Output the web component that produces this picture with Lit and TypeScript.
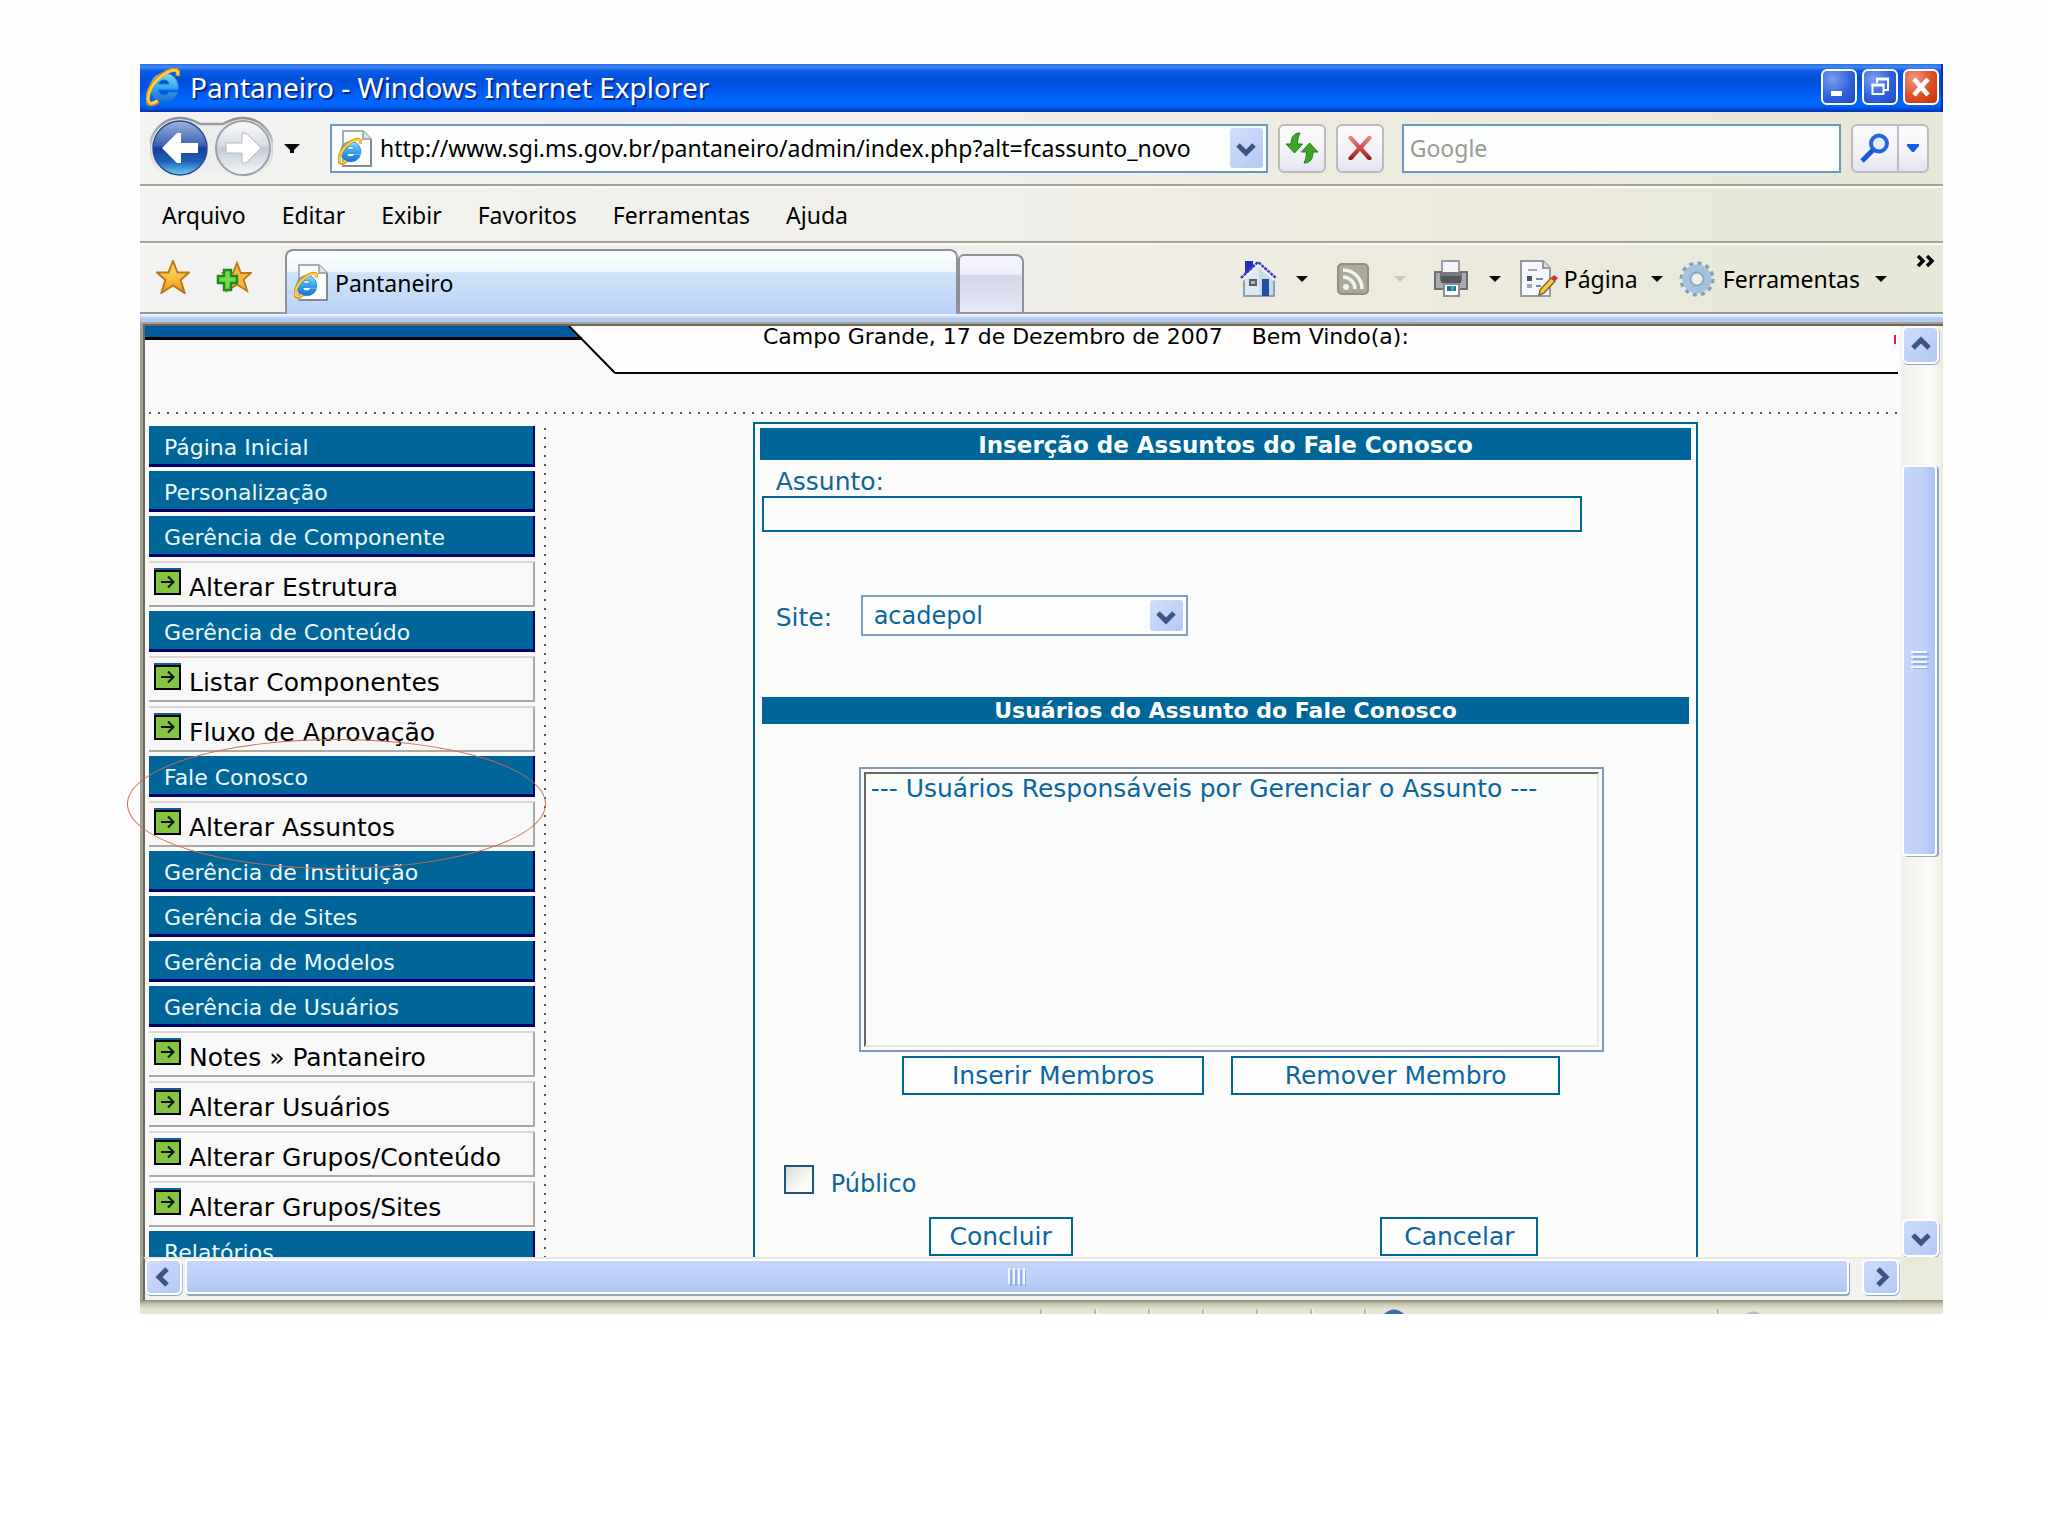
import { LitElement, html, css, svg } from "lit";
import type { TemplateResult } from "lit";
import { customElement } from "lit/decorators.js";

type MenuEntry = { label: string; sub?: boolean };

const MENU: MenuEntry[] = [
  { label: "Página Inicial" },
  { label: "Personalização" },
  { label: "Gerência de Componente" },
  { label: "Alterar Estrutura", sub: true },
  { label: "Gerência de Conteúdo" },
  { label: "Listar Componentes", sub: true },
  { label: "Fluxo de Aprovação", sub: true },
  { label: "Fale Conosco" },
  { label: "Alterar Assuntos", sub: true },
  { label: "Gerência de Instituição" },
  { label: "Gerência de Sites" },
  { label: "Gerência de Modelos" },
  { label: "Gerência de Usuários" },
  { label: "Notes » Pantaneiro", sub: true },
  { label: "Alterar Usuários", sub: true },
  { label: "Alterar Grupos/Conteúdo", sub: true },
  { label: "Alterar Grupos/Sites", sub: true },
  { label: "Relatórios" },
];

const icon = (w: number, h: number, body: TemplateResult) =>
  html`<svg class="icon" width=${w} height=${h} viewBox="0 0 ${w} ${h}" aria-hidden="true">${body}</svg>`;

/* Browser mark, drawn in a 34x38 box. */
const markShapes = svg`
  <defs>
    <linearGradient id="mk" x1="0" y1="0" x2="0" y2="1">
      <stop offset="0" stop-color="#8ad8fb"/><stop offset=".5" stop-color="#35a6ee"/><stop offset="1" stop-color="#1a70d2"/>
    </linearGradient>
  </defs>
  <path d="M32 24h-9c-1 2-3 2.800-5.200 2.800-3.200 0-5-1.800-5.200-4.800H32.500c.8-9.400-4.600-17-14.200-17C9.600 5 4 11.500 4 19.500c0 8.300 5.600 14.400 13.900 14.400 6.800 0 12-3.600 14.100-9.900zM12.800 16c.4-2.400 2.400-4 5.200-4s4.700 1.600 5 4z" fill="url(#mk)" stroke="#1b74c9" stroke-width="1"/>
  <path d="M31.500 8c1-3.500.5-6-2.500-6.200C22 1.600 9 10.500 4.500 20 1 27.500.4 34.500 4 35.800c2.400.8 5.500-.8 8.200-3" fill="none" stroke="#d9960f" stroke-width="4.500"/>
  <path d="M31.500 7c.6-2.600.2-4.600-2.500-4.800C22 2 9.400 11 5 20.200 1.600 27.500 1.200 33.800 4.400 35c2 .6 4.500-.4 7-2.200" fill="none" stroke="#ffd34d" stroke-width="2.400"/>`;

const pageMark = icon(34, 37, svg`
  <path d="M5 1h20l8 8v27H5z" fill="#fcfdfe" stroke="#a9adb0" stroke-width="2"/>
  <path d="M33 9v27H5" fill="none" stroke="#85888c" stroke-width="2"/>
  <path d="M25 1v8h8" fill="#dfe3e8" stroke="#a9adb0" stroke-width="2"/>
  <g transform="translate(0 8) scale(.7)">${markShapes}</g>`);

const caret = (fill: string) => icon(12, 6, svg`<path d="M0 0h12l-6 6z" fill=${fill}/>`);
const bigCaret = icon(16, 9, svg`<path d="M0 0h16l-6 6v3H6V6z" fill="#0a0a0a"/>`);

const chevron = (dir: "up" | "down" | "left" | "right") => {
  const turn = { down: 0, left: 90, up: 180, right: 270 }[dir];
  return icon(22, 22, svg`<path transform="rotate(${turn} 11 11)" d="M3 8l8 8 8-8" fill="none" stroke="#3d5585" stroke-width="5"/>`);
};

const arrowBox = icon(27, 27, svg`
  <rect width="27" height="27" fill="#000"/><rect width="27" height="2" fill="#0b5fa0"/>
  <rect x="2" y="4" width="23" height="21" fill="#85c442"/>
  <path d="M7 14h11M14 8.500l5.500 5.500-5.500 5.500" fill="none" stroke="#111" stroke-width="2"/>`);

const star = svg`<path d="M17 1l4.500 11.500H33L24.600 20l4 13L17 25.500 5.400 33l4-13L1 12.500h11.500z"/>`;

@customElement("app-root")
export class AppRoot extends LitElement {
  static styles = css`
    :host {
      display: block;
      padding: 64px 105px 0 140px;
      background: #fefefe;
      --ui: "Noto Sans", "DejaVu Sans Condensed", sans-serif;
      --page: "DejaVu Sans", Verdana, sans-serif;
      --brand: #006699;
      --bar: linear-gradient(90deg, #f2f2f0 0%, #f0efeb 45%, #eeebdf 65%, #e6e8d8 100%);
    }
    * { box-sizing: border-box; }
    button, input, select { font: inherit; color: inherit; margin: 0; padding: 0; border: 0; border-radius: 0; outline: 0; appearance: none; background: none; }
    a { color: inherit; text-decoration: none; }
    .icon { display: block; flex: none; }
    .window { display: flex; flex-direction: column; position: relative; font: 23px/32px var(--ui); color: #000; }

    .title {
      display: flex; align-items: center; height: 48px; padding: 0 4px 2px 6px; gap: 5px;
      background: linear-gradient(180deg, #2b6fe0 0, #3f8cf5 3px, #0b5be6 7px, #0050dc 16px, #0058f0 28px, #0068ff 36px, #0064fa 42px, #0038b8 47px);
      color: #fff; box-shadow: inset -2px 0 #0830b0;
    }
    .title h1 { flex: 1; margin: 0 0 0 5px; font: 28px/40px var(--ui); text-shadow: 2px 2px #0a2a8a; }
    .winbtn {
      display: grid; place-items: center; width: 36px; height: 36px; border: 2px solid #fff; border-radius: 6px;
      background: radial-gradient(circle at 30% 25%, #7ba0f2, #2f62dc 55%, #1d48c0);
    }
    .close { background: radial-gradient(circle at 30% 25%, #f09a80, #dd4b26 55%, #c03208); }

    .nav { display: flex; align-items: center; height: 74px; padding: 0 14px 0 10px; background: var(--bar); border-bottom: 2px solid #a5a399; }
    .travel { margin-right: 11px; }
    .recent { margin-right: 30px; }
    .address, .search { display: flex; align-items: center; height: 49px; border: 2px solid #6d97be; background: #fcfefd; min-width: 0; }
    .address { flex: 924 1 0; padding: 0 3px 0 6px; gap: 8px; }
    .address input, .search input { flex: 1; min-width: 0; width: 0; height: 32px; }
    .search { flex: 423 1 0; padding: 0 6px; margin-right: 10px; }
    .search input::placeholder { color: #9a9a94; opacity: 1; }
    .drop { display: grid; place-items: center; width: 33px; height: 40px; border-radius: 3px; background: linear-gradient(135deg, #d3e0fb, #b1c8f4); flex: none; }
    .tool { display: grid; place-items: center; width: 48px; height: 49px; border: 2px solid #bcbcc0; border-radius: 6px; background: linear-gradient(180deg, #fbfbfc, #f2f2f6 60%, #e3e4f0); flex: none; }
    .reload { margin: 0 10px; }
    .stop { margin-right: 18px; }
    .go { border-radius: 6px 0 0 6px; }
    .engines { width: 30px; border-left: 0; border-radius: 0 6px 6px 0; }

    .menu { display: flex; align-items: center; gap: 36px; height: 57px; padding: 0 22px; background: var(--bar); border-top: 2px solid #fbfbf8; border-bottom: 2px solid #a5a399; }

    .tabs { display: flex; align-items: center; height: 71px; padding-right: 8px; background: var(--bar); border-top: 2px solid #fbfbf8; border-bottom: 2px solid #96989a; }
    .favs { display: flex; gap: 26px; width: 145px; padding: 0 0 4px 16px; }
    .tab {
      display: flex; align-items: center; gap: 7px; flex: 0 1 673px; align-self: flex-end; height: 65px; margin-bottom: -2px; padding: 0 8px 0 7px;
      border: 2px solid #8e9298; border-bottom: 0; border-radius: 8px 8px 0 0;
      background: linear-gradient(180deg, #fbfffd 0, #eef7fd 20px, #cfe4fa 22px, #c3dbf8 45px, #b6cef5 65px);
    }
    .newtab { flex: none; width: 66px; height: 58px; align-self: flex-end; border: 2px solid #8e9298; border-bottom: 0; border-radius: 6px 8px 0 0; background: linear-gradient(180deg, #f6f7fc 0, #eceefa 18px, #d3d7ea 20px, #e6e9f8 58px); }
    .tools { display: flex; align-items: center; align-self: stretch; flex: 1; justify-content: flex-end; }
    .tools > * { display: flex; align-items: center; }
    .home { gap: 19px; margin-right: 29px; }
    .feed { gap: 25px; margin-right: 27px; }
    .print { gap: 20px; margin-right: 19px; }
    .page { gap: 6px; margin-right: 16px; }
    .page .icon:last-child, .gear .icon:last-child { margin-left: 7px; }
    .gear { gap: 8px; margin-right: 29px; }
    .tools .more { align-self: flex-start; margin-top: 10px; }
    .strip { height: 8px; background: linear-gradient(180deg, #f4f8ff 0, #cfdffa 3px, #b4c9f2 4px); }

    .body { display: grid; grid-template-columns: minmax(0, 1fr) 42px; border-left: 3px solid #a3a294; border-top: 2px solid #a3a294; background: #e9ead9; }
    .view { max-height: 933px; overflow: hidden; border-left: 2px solid #6b675c; border-top: 2px solid #6b675c; background: #fafafa; color: #000; font: 22px/32px var(--page); }

    .banner { display: flex; height: 48px; padding-right: 3px; position: relative; }
    .welcome { display: flex; gap: 29px; flex: 1; padding-left: 148px; border-bottom: 2px solid #000; background: #fcfdfc; line-height: 22px; white-space: nowrap; }
    .banner svg { flex: none; display: block; }
    .mask { position: absolute; right: 7px; top: -5px; width: 35%; max-width: 480px; height: 30px; background: #fefefe; }
    .cursor { position: absolute; right: 5px; top: 9px; width: 2px; height: 9px; background: #e8145a; }
    .dots { height: 2px; margin: 38px 0 0 4px; background: repeating-linear-gradient(90deg, #555 0 2px, transparent 2px 9px); }

    .columns { display: flex; align-items: stretch; padding-left: 4px; }
    .side { display: flex; flex-direction: column; gap: 4px; width: 386px; padding: 12px 0 0; flex: none; list-style: none; margin: 0; }
    .head a { display: block; height: 41px; padding: 6px 0 0 15px; border-right: 2px solid #000066; border-bottom: 3px solid #000066; background: var(--brand); color: #eef8fc; line-height: 32px; }
    .item a { display: flex; height: 46px; gap: 8px; padding: 5px 0 0 5px; border: 2px solid #aaa9a6; border-top-color: #d9d8d6; border-left: 0; background: #f8f8f9; font-size: 25px; line-height: 40px; white-space: nowrap; }
    .rail { width: 2px; margin: 14px 0 0 9px; flex: none; background: repeating-linear-gradient(180deg, #555 0 2px, transparent 2px 9px); }

    .main { flex: 1; padding: 8px 0 0 4px; display: flex; justify-content: center; }
    .panel { width: 70%; padding: 4px 5px 40px; border: 2px solid var(--brand); background: #fbfcfa; color: #0b659f; font-size: 25px; }
    .bar { margin: 0; background: var(--brand); color: #fff; text-align: center; font: bold 23px/32px var(--page); height: 32px; padding-top: 1px; }
    .bar.thin { font-size: 22px; line-height: 27px; height: 27px; padding: 0; margin: 61px 2px 0; }
    .label { display: block; padding: 8px 0 0 16px; line-height: 28px; }
    .subject { display: block; width: 88%; max-width: 820px; height: 36px; margin-left: 2px; border: 2px solid var(--brand); padding: 0 6px; }
    .site { display: flex; align-items: center; gap: 24px; margin-top: 63px; padding-left: 16px; }
    .site label { padding-top: 5px; width: 61px; }
    .combo { position: relative; width: 327px; height: 41px; font-size: 24px; }
    .combo select { width: 100%; height: 41px; border: 2px solid #7e9fc0; padding: 0 44px 0 11px; background: #fcfdfd; }
    .combo .drop { position: absolute; right: 5px; top: 5px; height: 31px; pointer-events: none; }
    .members { width: 80%; max-width: 745px; margin: 43px 0 0 99px; }
    .listbox { padding: 3px; border: 2px solid #7e9cba; background: #fbfbfd; }
    .listbox select { display: block; width: 100%; height: 275px; border: 2px solid #6a6664; border-right-color: #e8e8e2; border-bottom-color: #e8e8e2; background: #fafbfb; overflow: hidden; }
    .listbox option { padding: 0 5px; color: #0b659f; min-height: 0; line-height: 30px; }
    .pair { display: flex; justify-content: center; gap: 27px; margin-top: 4px; }
    .btn { height: 39px; border: 2px solid var(--brand); background: #fcfdfc; line-height: 32px; text-align: center; cursor: pointer; }
    .add { flex: 0 1 302px; } .del { flex: 0 1 329px; }
    .public { display: flex; gap: 17px; margin: 70px 0 0 24px; height: 29px; font-size: 24px; }
    .public input { width: 30px; height: 29px; border: 2px solid #1d5480; background: linear-gradient(135deg, #d9dbd8, #fbfbfa 70%); }
    .public label { line-height: 39px; height: 39px; }
    .actions { display: flex; justify-content: space-between; margin: 23px 153px 0 169px; }
    .ok { width: 144px; } .cancel { width: 158px; }

    .vbar { display: flex; flex-direction: column; align-items: flex-start; padding-left: 1px; border-top: 2px solid #6b675c; background: linear-gradient(90deg, #f0efe8, #fbfbf7 70%, #f3f2ea 90%, #e9e8dc); }
    .hbar { display: flex; align-items: flex-start; height: 43px; border-left: 2px solid #6b675c; border-top: 2px solid #ebe9df; padding-right: 2px; background: #f2f3ee; gap: 3px; }
    .sb { display: grid; place-items: center; width: 37px; height: 38px; flex: none; border: 2px solid #fff; border-radius: 6px; background: linear-gradient(135deg, #cfdcfb, #b3c8f4); box-shadow: 0 2px 0 -1px #8fa8d0, 1px 1px 0 #a9bde0; }
    .hbar .sb { height: 36px; }
    .grow-a { flex: 101 1 0; } .grow-b { flex: 364 1 0; }
    .thumb { display: grid; place-items: center; border: 2px solid #fff; border-radius: 4px; }
    .vbar .thumb { width: 35px; flex: 389 1 0; background: linear-gradient(90deg, #c6d5fb, #bfd0f8 60%, #adc3f3); box-shadow: 2px 1px 0 #8fa8c8; }
    .hbar .thumb { flex: 1; height: 35px; margin-right: 10px; background: linear-gradient(180deg, #c8d5f9, #bdd1f7 50%, #b0c7ee); box-shadow: 1px 2px 0 #8fa8c0; }
    .corner { background: #e9ead9; }

    .status { display: flex; height: 14px; padding-top: 9px; background: linear-gradient(180deg, #87877a 0, #a9aa98 2px, #cdcdb9 5px, #e3e4d1 9px, #e6e7d6 14px); }
    .status span { border-left: 2px solid #babbaa; box-shadow: inset 1px 0 #f7f7ef; height: 5px; }
    .status .lead { flex: 1; border: 0; box-shadow: none; }
    .cell { width: 54px; }
    .zone { width: 353px; padding-left: 18px; } .last { width: 226px; padding-left: 24px; }

    .ring { position: absolute; left: -13px; top: 675px; width: 419px; height: 130px; border: 1px solid #cf6a4c; border-radius: 50%; pointer-events: none; }
  `;

  private titleBar() {
    return html`<header class="title">
      ${icon(34, 38, markShapes)}
      <h1>Pantaneiro - Windows Internet Explorer</h1>
      <button class="winbtn" aria-label="Minimizar">${icon(22, 22, svg`<path d="M3 15h11v5H3z" fill="#fff"/>`)}</button>
      <button class="winbtn" aria-label="Restaurar">${icon(22, 22, svg`<path d="M8 7V3h11v11h-4M3.500 9h11v9h-11z" fill="none" stroke="#fff" stroke-width="2"/><path d="M2.500 7.500h13v3h-13zM7 1.500h13v3H7z" fill="#fff"/>`)}</button>
      <button class="winbtn close" aria-label="Fechar">${icon(22, 22, svg`<path d="M4 3l14 16M18 3L4 19" stroke="#fff" stroke-width="4.500"/>`)}</button>
    </header>`;
  }

  private navBar() {
    return html`<div class="nav">
      <div class="travel">${icon(123, 64, svg`
        <defs>
          <linearGradient id="bk" x1="0" y1="0" x2="0" y2="1"><stop offset="0" stop-color="#9db3de"/><stop offset=".45" stop-color="#3c63b4"/><stop offset=".5" stop-color="#123f98"/><stop offset=".75" stop-color="#1f62b8"/><stop offset="1" stop-color="#6fd0f6"/></linearGradient>
          <linearGradient id="fw" x1="0" y1="0" x2="0" y2="1"><stop offset="0" stop-color="#fafbfc"/><stop offset=".45" stop-color="#d9dde3"/><stop offset=".5" stop-color="#c3cad3"/><stop offset="1" stop-color="#f4fbfd"/></linearGradient>
          <linearGradient id="rm" x1="0" y1="0" x2="0" y2="1"><stop offset="0" stop-color="#8d9094"/><stop offset=".5" stop-color="#cfd1d2"/><stop offset="1" stop-color="#f5f6f5"/></linearGradient>
        </defs>
        <path d="M30 2c10 0 16 4 20 6h23c4-2 10-6 20-6a30 30 0 0 1 0 60c-8 0-14-2-19-5H49c-5 3-11 5-19 5a30 30 0 0 1 0-60z" fill="#eceded" stroke="url(#rm)" stroke-width="2.500"/>
        <circle cx="30" cy="32" r="27" fill="url(#bk)" stroke="#27498c" stroke-width="1.500"/>
        <circle cx="93" cy="32" r="27" fill="url(#fw)" stroke="#9aa1a9" stroke-width="2"/>
        <path d="M12 32l15-15h4v10h17v10H31v10h-4z" fill="#fff"/>
        <path d="M111 32L96 17h-4v10H76v10h16v10h4z" fill="#fff" stroke="#b4bbc4" stroke-width="1"/>`)}</div>
      <button class="recent" aria-label="Páginas recentes">${bigCaret}</button>
      <div class="address">${pageMark}
        <input type="text" aria-label="Endereço" value="http://www.sgi.ms.gov.br/pantaneiro/admin/index.php?alt=fcassunto_novo">
        <button class="drop" aria-label="Endereços digitados">${chevron("down")}</button>
      </div>
      <button class="tool reload" aria-label="Atualizar">${icon(34, 32, svg`
        <path d="M15 1c-6 0-9 4-9 11H1l8.500 9 8-9h-5c0-5 1-8 2.500-11z" fill="#3ea52c" stroke="#1f7d18" stroke-width="1"/>
        <path d="M19 31c6 0 9-4 9-11h5l-8.500-9-8 9h5c0 5-1 8-2.500 11z" fill="#3ea52c" stroke="#1f7d18" stroke-width="1"/>`)}</button>
      <button class="tool stop" aria-label="Parar">${icon(28, 26, svg`
        <defs><linearGradient id="st" x1="0" y1="0" x2="0" y2="1"><stop offset="0" stop-color="#ea9090"/><stop offset=".6" stop-color="#cc4040"/><stop offset="1" stop-color="#8f1c1c"/></linearGradient></defs>
        <path d="M3 1h3l8 9 8-9h3l1 2-9 10 9 10-1 2h-3l-8-9-8 9H3l-1-2 9-10-9-10z" fill="url(#st)"/>`)}</button>
      <div class="search"><input type="text" aria-label="Pesquisar" placeholder="Google"></div>
      <button class="tool go" aria-label="Pesquisar">${icon(30, 30, svg`
        <circle cx="19" cy="10.500" r="8" fill="#e4eefc" stroke="#2b66e0" stroke-width="4"/><path d="M13 17L2 28" stroke="#1b55d8" stroke-width="5"/>`)}</button>
      <button class="tool engines" aria-label="Opções de pesquisa">${icon(12, 8, svg`<path d="M0 0h12v2L7 8H5L0 2z" fill="#1560e6"/>`)}</button>
    </div>`;
  }

  private tabBar() {
    return html`<div class="tabs">
      <div class="favs">
        <button aria-label="Favoritos">${icon(34, 34, svg`<defs><linearGradient id="sg" x1="0" y1="0" x2="0" y2="1"><stop offset="0" stop-color="#ffe27a"/><stop offset="1" stop-color="#f59a10"/></linearGradient></defs><g fill="url(#sg)" stroke="#b9791a" stroke-width="2">${star}</g>`)}</button>
        <button aria-label="Adicionar a Favoritos">${icon(36, 34, svg`<g transform="translate(6 2) scale(.88)" fill="#f9b63c" stroke="#b9791a" stroke-width="2">${star}</g><path d="M8 10h7v6h6v7h-6v7H8v-7H2v-7h6z" fill="#6fdc4c" stroke="#1c8a1c" stroke-width="2.500"/>`)}</button>
      </div>
      <a class="tab" href="#">${pageMark}<span>Pantaneiro</span></a>
      <button class="newtab" aria-label="Nova guia"></button>
      <div class="tools">
        <button class="home" aria-label="Página inicial">${icon(37, 37, svg`
          <path d="M5 1h8v12H5z" fill="#2a2ac0"/>
          <path d="M4 18L19 4l15 14v18H4z" fill="#dfe9f0" stroke="#8aa0ae" stroke-width="2"/>
          <path d="M19 6l14 13v16H19z" fill="#c8dbe6"/>
          <path d="M2 20L18 4.500 35 20" fill="none" stroke="#f4f4ff" stroke-width="3"/>
          <path d="M1 18L18 2l18 16" fill="none" stroke="#3a3ad0" stroke-width="2.500" stroke-dasharray="3 1"/>
          <path d="M9 19h8v7H9z" fill="#555c62"/><path d="M11 21h4v3h-4z" fill="#a9b6bd"/><path d="M22 19h7v17h-7z" fill="#1f4fa0"/>`)}${caret("#0a0a0a")}</button>
        <button class="feed" aria-label="Feeds" disabled>${icon(32, 32, svg`
          <rect x="1" y="1" width="30" height="30" rx="4" fill="#aaa99d" stroke="#8f8e83" stroke-width="2"/>
          <circle cx="9" cy="24" r="3" fill="#f4f3ea"/><path d="M6 14a12 12 0 0 1 12 12M6 7a19 19 0 0 1 19 19" fill="none" stroke="#f4f3ea" stroke-width="3.500"/>`)}${caret("#c9c7ba")}</button>
        <button class="print" aria-label="Imprimir">${icon(36, 37, svg`
          <path d="M9 1h17v14H9z" fill="#f4f5fa" stroke="#9a9ba2" stroke-width="2"/>
          <path d="M2 12h6v8h20v-8h6v17H2z" fill="#a9abae" stroke="#6d6f72" stroke-width="2"/>
          <path d="M8 12h20v11H8z" fill="#55575a"/><path d="M8 12h20v4H8z" fill="#77797c"/>
          <path d="M11 24h15v12H11z" fill="#fff" stroke="#8c8d92" stroke-width="2"/>
          <path d="M14 26h9v5h-9z" fill="#2468c4"/><path d="M18 26h3v5h-3z" fill="#3fae7c"/>`)}${caret("#0a0a0a")}</button>
        <button class="page">${icon(38, 37, svg`
          <path d="M1 1h22l7 7v28H1z" fill="#f7f8fc" stroke="#9699a2" stroke-width="2"/>
          <path d="M23 1v7h7" fill="#dcdfe6" stroke="#9699a2" stroke-width="2"/>
          <path d="M8 10h9" stroke="#a3a8b8" stroke-width="2"/><path d="M7 16h5v5H7z" fill="#4c5078"/><path d="M7 24h5v4H7z" fill="#a3a6ba"/>
          <path d="M16 19h7M16 26h5" stroke="#6c88b4" stroke-width="2"/>
          <path d="M20 30L31 18l4 3-11 12-5 2z" fill="#f4c84a" stroke="#8c6a20" stroke-width="1.500"/><path d="M31 18l3-3 4 3-3 3z" fill="#c8323c"/>`)}<span>Página</span>${caret("#0a0a0a")}</button>
        <button class="gear">${icon(36, 36, svg`
          <circle cx="18" cy="18" r="15.500" fill="none" stroke="#7f9fbe" stroke-width="4" stroke-dasharray="4 4.115"/>
          <circle cx="18" cy="18" r="10.500" fill="none" stroke="#a5c3de" stroke-width="8"/>
          <circle cx="18" cy="18" r="6.500" fill="#efeee2" stroke="#86a8c6" stroke-width="2"/>`)}<span>Ferramentas</span>${caret("#0a0a0a")}</button>
        <button class="more" aria-label="Mais comandos">${icon(19, 12, svg`<path d="M2 1l5 5-5 5M11 1l5 5-5 5" fill="none" stroke="#000" stroke-width="3.500"/>`)}</button>
      </div>
    </div><div class="strip"></div>`;
  }

  private form() {
    return html`<form class="panel" @submit=${(e: Event) => e.preventDefault()}>
      <h2 class="bar">Inserção de Assuntos do Fale Conosco</h2>
      <label class="label" for="subject">Assunto:</label>
      <input class="subject" id="subject" type="text">
      <div class="site">
        <label for="site">Site:</label>
        <div class="combo"><select id="site"><option>acadepol</option></select><span class="drop">${chevron("down")}</span></div>
      </div>
      <h2 class="bar thin">Usuários do Assunto do Fale Conosco</h2>
      <div class="members">
        <div class="listbox"><select multiple size="8" aria-label="Usuários do assunto"><option>--- Usuários Responsáveis por Gerenciar o Assunto ---</option></select></div>
        <div class="pair"><button class="btn add" type="button">Inserir Membros</button><button class="btn del" type="button">Remover Membro</button></div>
      </div>
      <div class="public"><input id="public" type="checkbox"><label for="public">Público</label></div>
      <div class="actions"><button class="btn ok" type="submit">Concluir</button><button class="btn cancel" type="button">Cancelar</button></div>
    </form>`;
  }

  render() {
    return html`<div class="window">
      ${this.titleBar()} ${this.navBar()}
      <nav class="menu">${["Arquivo", "Editar", "Exibir", "Favoritos", "Ferramentas", "Ajuda"].map((m) => html`<a href="#">${m}</a>`)}</nav>
      ${this.tabBar()}
      <div class="body">
        <div class="view">
          <div class="banner">
            <svg width="470" height="48" viewBox="0 0 470 48" aria-hidden="true">
              <path d="M424 0L470 47V0z" fill="#fcfdfc"/>
              <path d="M0 0h424l11 11H0z" fill="#005a9c"/>
              <path d="M0 12.500h437" stroke="#000" stroke-width="3"/><path d="M424 0l46 47" stroke="#000" stroke-width="2"/>
            </svg>
            <div class="welcome"><span>Campo Grande, 17 de Dezembro de 2007</span><span>Bem Vindo(a):</span></div>
            <div class="mask"></div><div class="cursor"></div>
          </div>
          <div class="dots"></div>
          <div class="columns">
            <ul class="side">${MENU.map((m) => m.sub
              ? html`<li class="item"><a href="#">${arrowBox}<span>${m.label}</span></a></li>`
              : html`<li class="head"><a href="#">${m.label}</a></li>`)}</ul>
            <div class="rail"></div>
            <main class="main">${this.form()}</main>
          </div>
        </div>
        <div class="vbar">
          <button class="sb" aria-label="Rolar para cima">${chevron("up")}</button>
          <div class="grow-a"></div>
          <div class="thumb">${icon(18, 18, svg`<path d="M0 1h16M0 6h16M0 11h16M0 16h16" stroke="#f2f6ff" stroke-width="2"/><path d="M2 3h16M2 8h16M2 13h16M2 18h16" stroke="#8fb0ee" stroke-width="2"/>`)}</div>
          <div class="grow-b"></div>
          <button class="sb" aria-label="Rolar para baixo">${chevron("down")}</button>
        </div>
        <div class="hbar">
          <button class="sb" aria-label="Rolar para a esquerda">${chevron("left")}</button>
          <div class="thumb">${icon(18, 18, svg`<path d="M1 0v16M6 0v16M11 0v16M16 0v16" stroke="#f2f6ff" stroke-width="2"/><path d="M3 2v16M8 2v16M13 2v16M18 2v16" stroke="#8fb0ee" stroke-width="2"/>`)}</div>
          <button class="sb" aria-label="Rolar para a direita">${chevron("right")}</button>
        </div>
        <div class="corner"></div>
      </div>
      <footer class="status">
        <span class="lead"></span>${[0, 1, 2, 3, 4, 5].map(() => html`<span class="cell"></span>`)}
        <span class="zone">${icon(20, 5, svg`<path d="M0 5q10-9 20 0z" fill="#3b6cb0"/>`)}</span>
        <span class="last">${icon(20, 5, svg`<path d="M2 5q8-5 16 0z" fill="#b9c0b4"/>`)}</span>
      </footer>
      <div class="ring"></div>
    </div>`;
  }
}
